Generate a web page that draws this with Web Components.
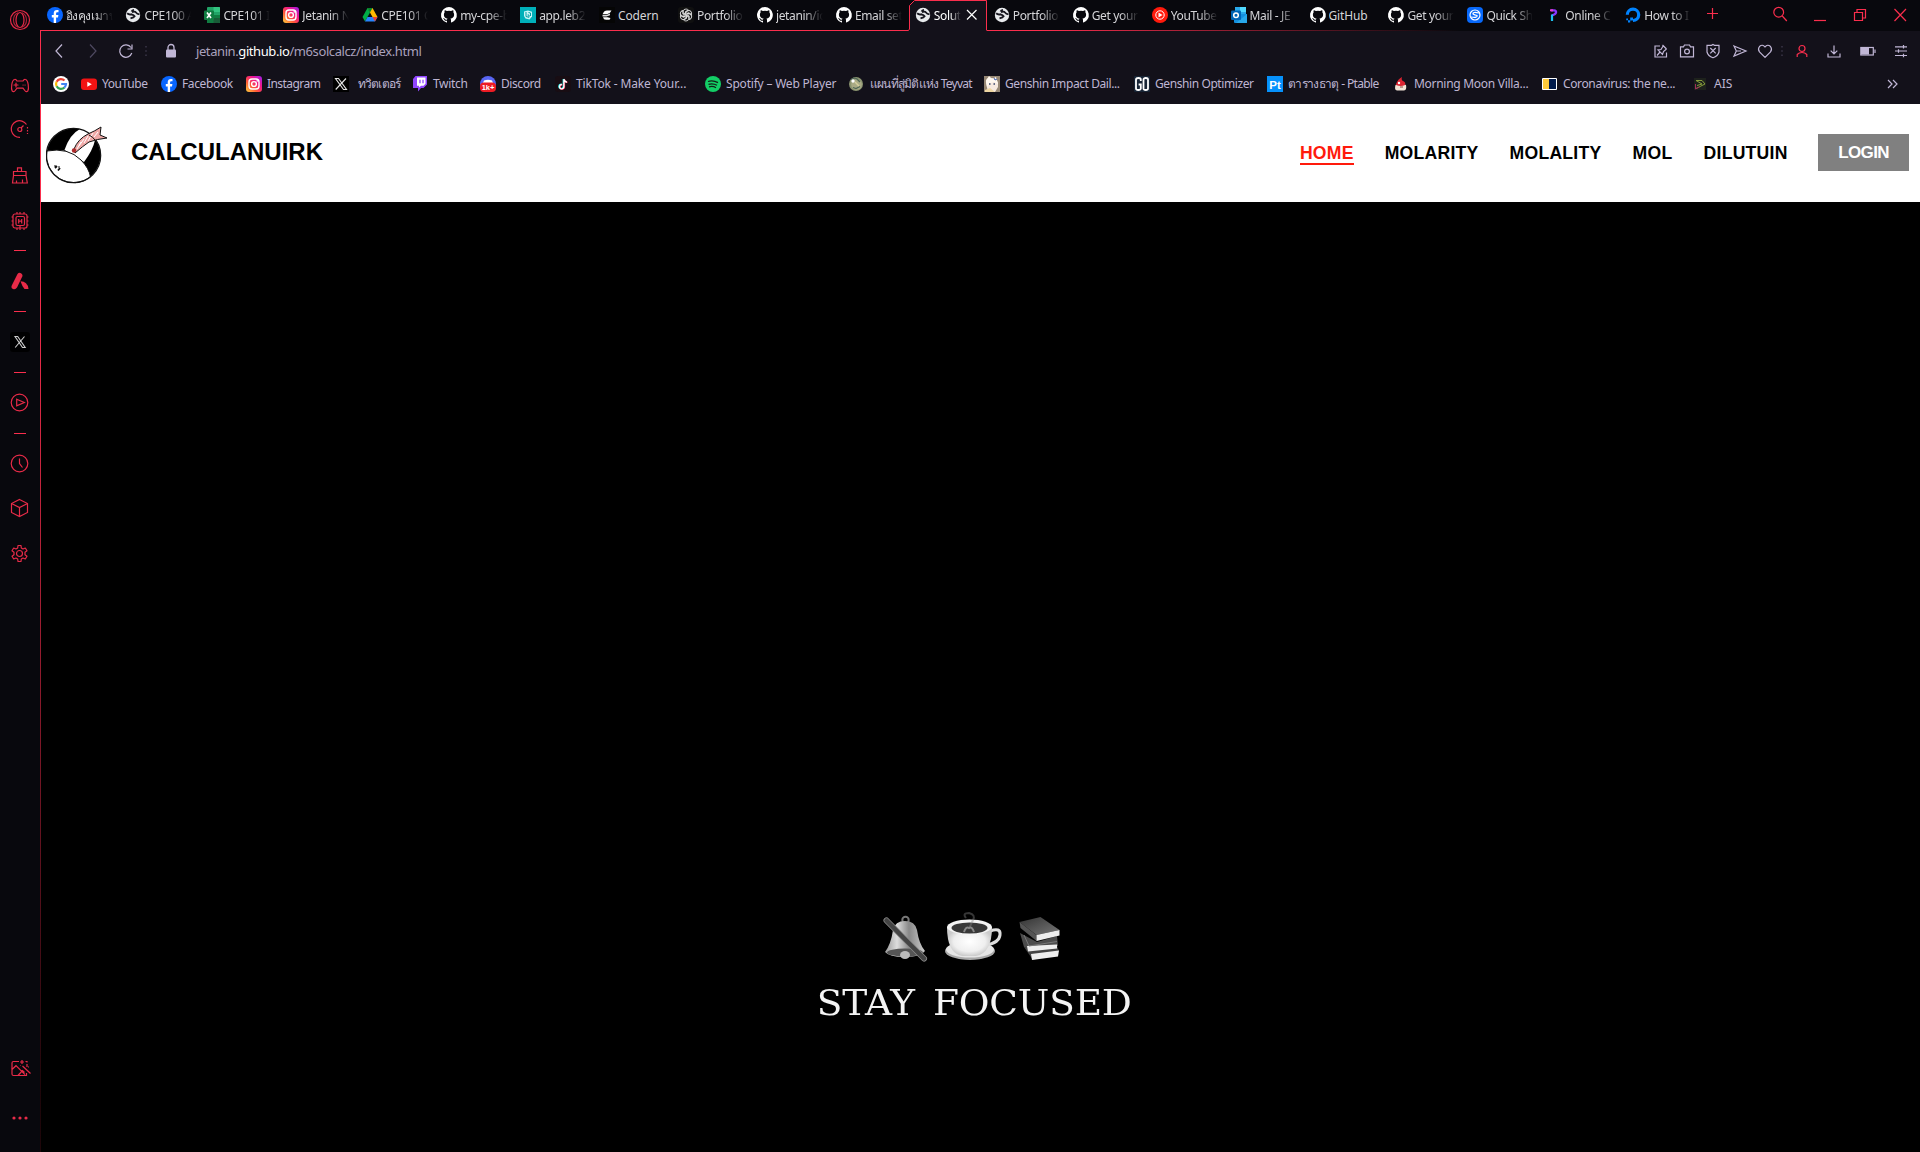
<!DOCTYPE html>
<html lang="en">
<head>
<meta charset="utf-8">
<title>Solution calculator</title>
<style>
html,body{margin:0;height:100%;background:#000;overflow:hidden}
body{font-family:"Noto Sans","Open Sans",sans-serif}
</style>
</head>
<body>
<browser-window></browser-window>
<script>
const globe='<circle cx="8" cy="8" r="7.2" fill="#e8eaed"/><path d="M2.200 6.300Q4 8 6.300 7.300L8.500 8.200 9.500 9.300 8.300 10.500 5.500 11.300" fill="none" stroke="#16151e" stroke-width="1.900"/><path d="M6.500 4.600Q7 3 9 2.800M7 5.200Q10 4 11 5.500T14.500 7.300" fill="none" stroke="#16151e" stroke-width="1.700"/>';
const cat='<path fill="#fff" d="M8 0A8 8 0 0 0 5.5 15.6c.4.1.5-.2.5-.4v-1.5c-2.2.5-2.7-1-2.7-1-.4-.9-.9-1.2-.9-1.2-.7-.5.1-.5.1-.5.8.1 1.2.8 1.2.8.7 1.3 1.9.9 2.3.7.1-.5.3-.9.5-1.1-1.8-.2-3.6-.9-3.6-4 0-.9.3-1.6.8-2.1-.1-.2-.4-1 .1-2.1 0 0 .7-.2 2.2.8a7.700 7.700 0 0 1 4 0c1.500-1 2.200-.8 2.200-.8.4 1.100.2 1.900.1 2.100.5.500.8 1.300.8 2.100 0 3.100-1.900 3.800-3.700 4 .3.3.6.8.6 1.500v2.200c0 .2.1.5.6.4A8 8 0 0 0 8 0z"/>';
const insta='<defs><linearGradient id="a" x1="0" y1="1" x2="1" y2="0"><stop offset="0" stop-color="#ffd23e"/><stop offset=".35" stop-color="#ff5a36"/><stop offset=".65" stop-color="#f0158a"/><stop offset="1" stop-color="#9b20f0"/></linearGradient></defs><rect width="16" height="16" rx="3" fill="url(#a)"/><g fill="none" stroke="#fff" stroke-width="1.4"><rect x="3" y="3" width="10" height="10" rx="3"/><circle cx="8" cy="8" r="2.400"/></g><circle cx="11.200" cy="4.900" r=".8" fill="#fff"/>';
const fb='<circle cx="8" cy="8" r="8" fill="#0866ff"/><path fill="#fff" d="M6.700 16V10.400H4.800V8h1.900V6.500c0-2.500 1.200-3.600 3.300-3.600.7 0 1.200.1 1.500.2v2.100h-1c-1 0-1.400.5-1.400 1.400V8h2.300l-.4 2.400H9.100V16z"/>';
const R='fill="none" stroke="#fa2e4d" stroke-width="1.200"', G='fill="none" stroke="#c1b7d6" stroke-width="1.200"';
const t=(s,x,y,z,c)=>`<text x="${x}" y="${y}" font-size="${z}" fill="${c}" font-family="Liberation Sans" font-weight="700" text-anchor="middle">${s}</text>`;
const ICONS={
 globe,cat,insta,fb,
 excel:'<rect x="3" width="13" height="16" rx="1" fill="#21a366"/><path d="M3 8h13v7q0 1-1 1H3z" fill="#107c41"/><path d="M9.500 0H15q1 0 1 1v4H9.500z" fill="#33c481"/><path d="M9.500 11H16v4q0 1-1 1H9.500z" fill="#185c37"/><rect y="3.500" width="10" height="9.500" rx="1" fill="#107c41"/><path d="m3 5.500 4 5.500M7 5.500 3 11" stroke="#fff" stroke-width="1.600"/>',
 drive:'<path d="M5.500 1h5l5 9h-5z" fill="#ffba00"/><path d="m5.500 1 2.500 4.500L3 14.500.5 10z" fill="#00ac47"/><path d="M3 14.500 5.500 10h10L13 14.500z" fill="#2684fc"/><path d="M13 14.500 10.500 10h5z" fill="#ea4335"/><path d="M5.500 1h5L8 5.500z" fill="#00832d"/>',
 leb:'<rect width="16" height="16" fill="#00b0b9"/><path d="M4 4.500 8 3.500l4 1.200V9.500L9.500 12.500 5.500 11.500 4 9z" fill="#c9f5f7"/><path d="M6 5v4.500l3 .8V8H7.500M8.500 5.500l2 .5v3" fill="none" stroke="#009da5"/>',
 codern:'<rect width="16" height="16" fill="#050505"/><path d="M4 6.500Q5 3.500 8 3.500h4.500L11 5.800 8 7.300H3.500z" fill="#fff"/><path d="M3.500 8h4l3.500-1.500V8.200L7.500 9.500h-4z" fill="#ddd"/><path d="M4 10.300h4.500L11.500 11 10.500 12.800H7Q4.500 12.800 4 10.300z" fill="#fff"/>',
 gpt:'<rect width="16" height="16" rx="3" fill="#101010"/><g fill="none" stroke="#ddd" stroke-width=".9"><path id="p" d="M8 5.700 5.300 7.200V4.200Q5.500 2 8 2q1.500 0 2.300 1L7.500 4.600V8"/><use href="#p" transform="rotate(60 8 8)"/><use href="#p" transform="rotate(120 8 8)"/><use href="#p" transform="rotate(180 8 8)"/><use href="#p" transform="rotate(240 8 8)"/><use href="#p" transform="rotate(300 8 8)"/></g>',
 ytm:'<circle cx="8" cy="8" r="8" fill="#ff1a0c"/><circle cx="8" cy="8" r="4.200" fill="none" stroke="#fff"/><path d="m6.500 5.500 4 2.500-4 2.500z" fill="#fff"/>',
 outlook:'<path d="M4 0h11v8H4z" fill="#28a8ea"/><path d="M9 0h6v5H9z" fill="#50d9ff"/><path d="M3 7h13v9H4q-1 0-1-1z" fill="#1490df"/><path d="m5 16 11-9v8q0 1-1 1z" fill="#28a8ea"/><rect y="3.500" width="10" height="9.500" rx="1" fill="#0064b5"/><circle cx="5" cy="8.200" r="2.300" fill="none" stroke="#fff" stroke-width="1.500"/>',
 quick:'<rect width="16" height="16" rx="4" fill="#0869fb"/><circle cx="8" cy="8" r="5" fill="none" stroke="#fff" stroke-width="1.200"/><path d="M12 6Q5.500 4.500 6 7q1.500 1 4 1.500Q11 11 4 10" stroke="#fff" fill="none" stroke-width="1.200"/>',
 online:'<path d="M5 3.300H8Q10.500 3.500 10 5.500T6 8.300" fill="none" stroke="#8a36ff" stroke-width="2.300"/><path d="M6 7.500v6.500" stroke="#1dc0ef" stroke-width="2.200"/><path d="M4 3.300h3" stroke="#e83bd0" stroke-width="2"/>',
 ocean:'<path d="M8 13.500A5.700 5.700 0 1 0 2.300 7.800" fill="none" stroke="#0083ff" stroke-width="3.200"/><path d="M5.200 10.500H8v3H5.200zM3 13.300h2.200v2.200H3zM1.200 11.500H3v1.800H1.200z" fill="#0083ff"/>',
 google:'<circle cx="8" cy="8" r="8" fill="#fff"/><g fill="none" stroke-width="2.200"><path d="M11.500 4.500A5 5 0 0 0 3.600 5.700" stroke="#ea4335"/><path d="M3.600 5.700a5 5 0 0 0 0 4.600" stroke="#fbbc05"/><path d="M3.600 10.300a5 5 0 0 0 7.900 1.200" stroke="#34a853"/><path d="M11.300 11.600A5 5 0 0 0 13 8H8.200" stroke="#4285f4"/></g>',
 yt:'<rect y="2.500" width="16" height="11.500" rx="3" fill="#f21313"/><path d="m6.300 5.700 4.500 2.500-4.500 2.500z" fill="#fff"/>',
 x:'<rect width="16" height="16" fill="#000"/><path d="M2.500 2.500h3l8 11h-3zM13 2.500 2.700 13.500" fill="none" stroke="#e6e6e6" stroke-width="1.100"/>',
 twitch:'<path d="M3.500 0H15v8.500L11.500 12H9l-3 3.500V12H1V3z" fill="#9146ff"/><path d="M5 1.500h8.500v6.300l-2 2H9L7 11.500V9.800H5z" fill="#fff"/><path d="M8 3.800v3.400M11 3.800v3.400" stroke="#9146ff" stroke-width="1.300"/>',
 discord:'<circle cx="8" cy="8" r="8" fill="#5865f2"/><path d="M4 4.500q4-1.500 8 0l1 2.500H3z" fill="#fff"/><rect y="6.500" width="16" height="9.500" rx="4" fill="#ed1c24"/>'+t('1k+',8,14,7.500,'#fff'),
 tiktok:'<rect width="16" height="16" rx="3" fill="#180d13"/><path d="M8.400 3v7.400a2.200 2.200 0 1 1-2-2.200M8.500 3q.5 2.500 3 2.800" fill="none" stroke="#25f4ee" stroke-width="1.600"/><path d="M9.400 3.600V11a2.200 2.200 0 1 1-2-2.200M9.500 3.600q.5 2.500 3 2.800" fill="none" stroke="#fe2c55" stroke-width="1.400"/><path d="M8.900 3.300v7.400a2.200 2.200 0 1 1-2-2.200M9 3.300q.5 2.500 3 2.800" fill="none" stroke="#fff" stroke-width="1.300"/>',
 spotify:'<circle cx="8" cy="8" r="8" fill="#13ce66"/><path d="M3 5.500q5-1.500 10 1.100M3.500 8.300q4.500-1.300 8.500 1M4 10.800q4-1 7 .9" fill="none" stroke="#122017" stroke-width="1.300"/>',
 teyvat:'<circle cx="7" cy="8" r="7" fill="#8b9470"/><circle cx="7.500" cy="8.500" r="5.300" fill="#a9aa85"/><path d="M2 4q3-3 6-1l3 3M4 11.500l3 1 4-2" fill="none" stroke="#4f6656" stroke-width="1.300"/><path d="m6 6 4 4" stroke="#d6cf9e" stroke-width="1.500"/><circle cx="4" cy="5" r="1.700" fill="#fff"/>',
 paimon:'<rect width="16" height="16" fill="#968774"/><path d="M2 7Q1 1 8 2q7 0 6 9l-3 5H4z" fill="#f6e9df"/><path d="M2 5l3-5 3 3 4-2 2 7-4-2-4 1-3 4z" fill="#fff8ef"/><path d="M5 8h1.500M9.500 8h1.500" stroke="#38456a" stroke-width="1.500"/><path d="m10 2 1 2 2-1" stroke="#3f60b0" fill="none"/><path d="m1 14 5-2 5 4H1z" fill="#eed6a2"/>',
 go:'<rect width="16" height="16" rx="1" fill="#172435"/><path d="M6.800 5V3.500Q6.800 2 4.500 2T2 3.500v9Q2 14 4.300 14t2.500-1.500V8.500H4.600M9.500 3.500Q9.500 2 11.700 2T14 3.500v9q0 1.500-2.300 1.500T9.500 12.500z" fill="none" stroke="#fff" stroke-width="1.800"/>',
 pt:'<rect width="16" height="16" fill="#0691fb"/>'+t('Pt',8,12.500,11.500,'#fff'),
 moon:'<path d="M2.500 9Q1 14 4 14.500h7q3-.5 2-5.500L8 7z" fill="#f2e4d6"/><path d="M3 8q2-5 6-7-1 3 1 4 3 1 2 4-4 2-9 0z" fill="#db2431"/><circle cx="6" cy="7" r="1.200" fill="#fff"/><path d="M7 11h3" stroke="#8d4b42"/>',
 covid:'<path d="M.5 2.500h14v11H.5z" fill="#001a4b" stroke="#fff"/><path d="M1 3h6v10H1z" fill="#ffca3a"/>',
 ais:'<rect x="1" y="2" width="12" height="12" fill="#1d211c"/><path d="M3 4.500h6L12 8 3 12.500M3 4.500 9 8l-5 1.500" fill="none" stroke="#879d3b"/><path d="M2.500 8v5l4-2" fill="none" stroke="#a22c59"/>',
 // toolbar
 back:`<path d="M11 1.500 5 8l6 6.500" ${G}/>`, fwd:'<path d="m5 1.500 6 6.500-6 6.500" fill="none" stroke="#4e4960" stroke-width="1.200"/>',
 reload:`<path d="M13.800 10A6.200 6.200 0 1 1 13 4.500M14 1.500v4.500H9.500" ${G}/>`,
 dots:'<path d="M7 3h2v1.500H7zM7 7.300h2v1.500H7zM7 11.500h2V13H7z" fill="#302c3c"/>',
 lock:'<path d="M5 7V4.500a3 3 0 0 1 6 0V7" fill="none" stroke="#c1b7d6" stroke-width="1.300"/><rect x="3" y="6.500" width="10" height="8" rx="1" fill="#c1b7d6"/>',
 pin:`<path d="M7 3H2v11h11.500V9.500M9.500 2l4 4M10.300 2.800 8 6.500l-3 .5 4.500 4.500 1-3 3-2.500M7 9l-3 3.500" ${G}/>`,
 camera:`<path d="M1.500 3.800h3L5.500 2h5l1 1.800h3v10h-13z" ${G}/><circle cx="8" cy="8.500" r="2.400" ${G}/>`,
 shield:`<path d="m8 1.500 1.500.8h4.500V9Q13 13 8 14.800 3 13 2 9V2.300h4.500zM5.300 5l5.400 5.400M10.700 5l-5.400 5.400" ${G}/>`,
 send:`<path d="m2 3 12 5-12 5 2.300-5zM4.300 8H9" ${G}/>`,
 heart:`<path d="M8 14.300 2.500 8.800Q.5 6 2.500 3.500 5.500.8 8 4q2.500-3.200 5.500-.5 2 2.500 0 5.300z" ${G}/>`,
 person:`<circle cx="8" cy="5.500" r="3" ${R}/><path d="M3.200 14v-2.500Q5 9.500 8 9.500t4.800 2V14" ${R}/>`,
 download:`<path d="M2 10.500V14h12v-3.500M8 2.500V11M4.700 7.700 8 11l3.300-3.300" ${G}/>`,
 battery:`<rect x=".8" y="4.500" width="12.500" height="7.500" ${G}/><path d="M1 5h8v6.500H1z" fill="#c1b7d6"/><path d="M15 6.500V10" ${G}/>`,
 sliders:`<path d="M2 3.800h12M2 8h12M2 12.500h12M10.500 2v3.600M5.500 6.200v3.600M10.500 10.700v3.600" ${G}/>`,
 chevs:`<path d="m4 4 4 4-4 4M9 4l4 4-4 4" ${G}/>`,
 close:'<path d="m3 3 9.500 9.500M12.500 3 3 12.500" stroke="#fff" stroke-width="1.200"/>',
 plus:`<path d="M8.500 2v11M3 7.500h11" ${R}/>`, search:`<circle cx="6.700" cy="6.200" r="4.900" ${R}/><path d="m10.300 10 4.500 5" ${R}/>`,
 min:`<path d="M2 14.500h12" ${R}/>`, restore:`<path d="M2.500 5.500h8v8h-8zM5 5.500v-3h8.500V11h-3" ${R}/>`, wclose:`<path d="m2.500 2 11.500 12M14 2 2.500 14" ${R}/>`,
 // sidebar
 opera:`<circle cx="10" cy="10" r="9.500" ${R}/><ellipse cx="10" cy="10" rx="4" ry="7.500" ${R}/><path d="M12 2.800q4.500 2 4.500 7.200T12 17.200M8 2.800Q3.500 4.800 3.500 10T8 17.200" ${R} opacity=".7"/>`,
 pad:`<path d="M4.500 3.500Q6 3 7 5h6q1-2 2.500-1.500 2 .5 2.700 5 .7 4.500-.4 6.500-1.500 1.500-3-.5L13 12.200H7l-1.800 2.300q-1.500 2-3 .5-1.100-2-.4-6.500.7-4.500 2.700-5z" ${R}/><path d="M6 7v4M4 9h4M13 9h.1M15 9h.1" ${R} stroke-linecap="round"/>`,
 gauge:`<path d="M10 18.300A8.300 8.300 0 1 1 16.500 5.500" ${R}/><path d="M17.500 8v7" ${R} stroke-dasharray="1.500 1.500"/><circle cx="9.800" cy="10.500" r="2" ${R}/><path d="m11 9 2.500-2.500" ${R}/>`,
 broom:`<path d="M7.500 6.500V2.800h4v3.700M3.500 6.500h12.500v4H3.500zM3.500 10.500 2.500 18h14.800l-1.300-7.500M6.500 18v-2.500M12.500 18v-3.500" ${R}/>`,
 chip:`<rect x="3" y="3" width="14" height="14" rx="2" ${R}/><rect x="6" y="5.500" width="8.500" height="9" rx="1.500" ${R}/><path d="M8.700 8v4.500M11.700 8v4.500M8.700 10.200h3M7 3V1M10 3V1M14 3V1M7 17v2M10 19v-4M14 19v-2M3 6H1.500M3 10H1.500M3 14H1.500M18.500 6H17M18.500 10H17M18.500 14H17" ${R}/>`,
 gx:'<path d="M7.500 3Q9 1 11 2.200T12.300 5.500L7 16.500Q5.500 19 3 18T2 14z" fill="#fa2e4d"/><path d="M10.500 10.300q7 0 8 7.700H14.500Q12 15 10.500 10.300z" fill="#fa2e4d"/>',
 sx:'<rect width="20" height="20" rx="3" fill="#000"/><path d="M5 4.500h2.700l7.500 11h-2.700zM14.500 4.500l-9.300 11" fill="none" stroke="#ddd" stroke-width="1.100"/>',
 play:`<circle cx="9.500" cy="10.500" r="8.300" ${R}/><path d="m6.700 7.200 7.600 3.300-7.600 3.300z" ${R}/>`,
 clock:`<circle cx="9.500" cy="10.500" r="8.300" ${R}/><path d="M9.500 5.500v5l3 4" ${R}/>`,
 cube:`<path d="m9.500 1.500 8 4v9l-8 4-8-4v-9zM1.500 5.500l8 4 8-4M9.500 9.500v9" ${R}/>`,
 gear:`<circle cx="9.500" cy="10.500" r="3" ${R}/><path d="M7.700 5 8 2.500h3l.3 2.500 1.700 1 2.300-1 1.700 2.700-2 1.500v2.600l2 1.500-1.700 2.700-2.300-1-1.700 1-.3 2.500H8L7.700 16 6 15l-2.300 1L2 13.300l2-1.500V9.200L2 7.700 3.700 5 6 6z" ${R} stroke-linejoin="round"/>`,
 image:`<path d="M9 2.500H3.500Q2 2.500 2 4v11q0 1.500 1.500 1.500h13V14M2 10.500l4-3.800 9 9M8 16.500l4.500-5 2 2M12.500 7l8 7.500M12 1v4M10 3h4M17 5v3M15.500 2.500H17v1M10.500 6.500h.5M18 8h1" ${R}/>`,
 more:'<g fill="#fa2e4d"><circle cx="4" cy="10" r="1.600"/><circle cx="10" cy="10" r="1.600"/><circle cx="16" cy="10" r="1.600"/></g>'
};
const def=(name,html,init)=>customElements.define(name,class extends HTMLElement{
 connectedCallback(){ if(this.shadowRoot)return; const r=this.attachShadow({mode:'open'}); r.innerHTML=typeof html==='function'?html(this):html; if(init)init(this,r);}
});
def('ui-icon',e=>{const b=e.getAttribute('box')||16,s=e.getAttribute('size')||b;return `<style>:host{display:block;flex:none;width:${s}px;height:${s}px}svg{display:block;overflow:visible}</style><svg width="${s}" height="${s}" viewBox="0 0 ${b} ${b}">${ICONS[e.getAttribute('name')]}</svg>`});
// A single line whose tracking is adjusted to fill a given width.
def('fit-text','<style>:host{display:block;flex:none;white-space:pre}span{display:inline-block}</style><span><slot></slot></span>',(e,r)=>{
 const s=r.querySelector('span'),w=+e.getAttribute('w'),n=[...e.textContent].filter(c=>!/[\u0e31\u0e34-\u0e3a\u0e47-\u0e4e]/.test(c)).length;
 const now=s.offsetWidth; e.style.letterSpacing=((w-now)/n)+'px';
});
def('browser-tab',e=>`<style>:host{display:flex;flex:none;box-sizing:border-box;width:78.95px;height:30px;gap:3px;padding:7px 0 0 0;color:#d5d5d8;font-size:12px;line-height:17px}
 .t{width:47px;overflow:hidden;white-space:nowrap;letter-spacing:-.35px;-webkit-mask-image:linear-gradient(90deg,#000 60%,transparent 100%)}
 :host([whole]) .t{-webkit-mask-image:none;letter-spacing:-.15px}
 :host([active]){color:#fff}:host([active]) .t{width:27px;margin-right:0}
 </style><ui-icon name="${e.getAttribute('icon')}"></ui-icon><div class="t"><slot></slot></div>${e.hasAttribute('active')?'<ui-icon name="close"></ui-icon>':''}`);
const tabs=[['fb','อิงคุงเมาน'],['globe','CPE100 A'],['excel','CPE101 I'],['insta','Jetanin N'],['drive','CPE101 C'],['cat','my-cpe-b'],['leb','app.leb2'],['codern','Codern'],['gpt','Portfolio'],['cat','jetanin/io'],['cat','Email set'],['globe','Solut'],['globe','Portfolio'],['cat','Get your'],['ytm','YouTube'],['outlook','Mail - JE'],['cat','GitHub'],['cat','Get your'],['quick','Quick Sh'],['online','Online C'],['ocean','How to I']];
def('tab-strip',`<style>:host{display:flex;position:relative;height:31px;background:#08080d;padding-left:6.500px}
 .frame{position:absolute;left:0;top:0}
 .tabs{display:flex;position:relative;width:1657.500px}
 .win{display:flex;position:relative;padding-top:6px}
 </style>
 <svg class="frame" width="1880" height="31"><defs><linearGradient id="f" gradientUnits="userSpaceOnUse" x1="1000" x2="1420" y1="0" y2="0"><stop stop-color="#fa2e4d"/><stop offset="1" stop-color="#fa2e4d" stop-opacity="0"/></linearGradient></defs><path d="M869.500 31V5.500L874.500.5H946.500V31z" fill="#13111a"/><path d="M0 30.500H868.500L869.500 29V5.500L874.500.5H946.500V30.500" fill="none" stroke="#fa2e4d"/><path d="M947 30h500v1H947z" fill="url(#f)"/></svg>
 <div class="tabs">${tabs.map(([i,s],k)=>`<browser-tab icon="${i}" ${k==11?'active':''} ${s=='GitHub'||s=='Codern'?'whole':''}>${s}</browser-tab>`).join('')}</div>
 <div class="win"><ui-icon name="plus" style="margin-right:52px"></ui-icon><ui-icon name="search" style="margin-right:24px"></ui-icon><ui-icon name="min" style="margin-right:24px"></ui-icon><ui-icon name="restore" style="margin-right:24px;margin-top:1px"></ui-icon><ui-icon name="wclose" style="margin-top:1px"></ui-icon></div>`);
const left=[['back',18],['fwd',17],['reload',4],['dots',9],['lock',17]];
const right=[['pin',10],['camera',10],['shield',11],['send',9],['heart',1],['dots',4],['person',16],['download',18],['battery',17],['sliders',0]];
const ic=a=>a.map(([n,m])=>`<ui-icon name="${n}" style="margin-right:${m}px"></ui-icon>`).join('');
def('address-bar',`<style>:host{display:flex;align-items:center;box-sizing:border-box;height:41px;padding:0 11px 1px;color:#aaa1bd;font-size:13px;background:#13111a}
 .r{display:flex;margin-left:auto}b{color:#fff;font-weight:400}</style>${ic(left)}<fit-text w="225">jetanin.<b>github.io</b>/m6solcalcz/index.html</fit-text><div class="r">${ic(right)}</div>`);
const marks=[['google','',53,0],['yt','YouTube',81,46],['fb','Facebook',161,51],['insta','Instagram',246,53],['x','ทวิตเตอร์',333,42],['twitch','Twitch',412,34],['discord','Discord',480,40],['tiktok','TikTok - Make Your...',555,110],['spotify','Spotify – Web Player',705,110],['teyvat','แผนที่สู่มิติแห่ง Teyvat',849,102],['paimon','Genshin Impact Dail...',984,115],['go','Genshin Optimizer',1134,99],['pt','ตารางธาตุ - Ptable',1267,91],['moon','Morning Moon Villa...',1393,114],['covid','Coronavirus: the ne...',1542,112],['ais','AIS',1693,18],['chevs','',1884,0]];
def('bookmark-bar',`<style>:host{display:flex;height:32px;padding:0 0 0 13px;background:#13111a;color:#bfb6d3;font-size:12px}
 .m{display:flex;flex:none;gap:5px;align-items:center;height:24px}.m fit-text{margin-top:-1px}.wide{gap:9px}</style>${marks.map(([i,s,x,w],k)=>`<div class="m ${i=='x'?'wide':''}" style="width:${k<16?marks[k+1][2]-x:16}px"><ui-icon name="${i}"></ui-icon>${s?`<fit-text w="${w}">${s}</fit-text>`:''}</div>`).join('')}`);
const side=[['opera',10],['pad',76],['gauge',119],['broom',165],['chip',211],['-',250],['gx',271],['-',311],['sx',332],['-',372],['play',392],['-',433],['clock',453],['cube',498],['gear',543],['image',1059],['more',1108]];
let end=0;
def('side-bar',`<style>:host{display:flex;flex-direction:column;box-sizing:border-box;width:40px;height:1152px;padding-left:10px;background:#08080d}hr{flex:none;width:12px;height:1px;border:0;margin:0 0 0 4px;background:#fa2e4d}ui-icon{opacity:.92}</style>${side.map(([n,y])=>{const m=y-end;end=y+(n=='-'?1:20);return n=='-'?`<hr style="margin-top:${m}px">`:`<ui-icon name="${n}" box="20" style="margin-top:${m}px"></ui-icon>`}).join('')}`);
def('club-logo',`<style>:host{display:block;width:62px;height:58px}svg{display:block}</style><svg width="62" height="58" viewBox="0 0 62 58">
<circle cx="27.500" cy="29.500" r="27" fill="#000"/><path d="M18.500 24Q24 8 34 3q7 1 13 7 2 3 2 4Q47 24 38 36z" fill="#fff"/>
<path d="M.8 25Q22 21 35 34q8 8 9.500 17A27.300 27.300 0 0 1 .8 25z" fill="#fff" stroke="#111"/><circle cx="27.500" cy="29.500" r="27.200" fill="none" stroke="#111" stroke-width="1.200"/>
<path d="M28 23Q32 13 42 8q7-3 13-7l-1 8 7 3q-10 1-18 4-6 4-14 11z" fill="#efa9a7" stroke="#111"/><path d="M33 20l5-7M38 17l4-7M42 15l5-8M31 23l4-7M48 11l4-5" stroke="#fff"/><path d="M43 9q4 2 6 5" fill="none" stroke="#111"/>
<circle cx="28" cy="24.500" r="2.200" fill="#ad2a2a"/><path d="m9 42 2-2M12 44.500l2-2.500M8.500 40h1M12.500 41h1" stroke="#111" stroke-width="1.800"/></svg>`);
def('site-header',`<style>:host{display:flex;align-items:center;box-sizing:border-box;height:98px;padding:0 11px 0 6px;background:#fff;color:#000;font-family:"Liberation Sans",Arial,sans-serif;font-weight:700;font-size:17.600px;line-height:20px}
 club-logo{margin-top:4px}.brand{font-size:24px;line-height:28px;margin:-2px auto 0 23px}
 nav{display:flex;align-items:center;gap:31px}.on{color:#ff1a0c;border-bottom:2px solid #ff1a0c;margin-top:2px}
 .login{background:#808080;color:#fff;padding:9px 20px 8px;margin:-1px 0 0 -.5px;font-size:17px}</style>
 <club-logo></club-logo><fit-text class="brand" w="192">CALCULANUIRK</fit-text>
 <nav><fit-text class="on" w="54">HOME</fit-text><fit-text w="94">MOLARITY</fit-text><fit-text w="92">MOLALITY</fit-text><fit-text w="40">MOL</fit-text><fit-text w="84">DILUTUIN</fit-text><fit-text class="login" w="51">LOGIN</fit-text></nav>`);
def('focus-banner',`<style>:host{display:flex;flex-direction:column;align-items:center;box-sizing:border-box;height:950px;padding:708px 11px 0 0;background:#000;color:#f4f4f4}
 svg{display:block;margin-right:8px}.s{font:35px/44px "DejaVu Serif",serif;word-spacing:6px;margin-top:17px;transform:scaleX(1.07)}</style>
 <svg width="190" height="54" viewBox="876 910 190 54"><defs>
 <linearGradient id="b" x2="1"><stop stop-color="#999"/><stop offset=".3" stop-color="#ddd"/><stop offset=".6" stop-color="#888"/><stop offset="1" stop-color="#ccc"/></linearGradient>
 <linearGradient id="k" x1="0" x2="1" y2="1"><stop stop-color="#333"/><stop offset="1" stop-color="#777"/></linearGradient>
 <radialGradient id="c"><stop stop-color="#fff"/><stop offset=".7" stop-color="#efefef"/><stop offset="1" stop-color="#ccc"/></radialGradient></defs>
 <circle cx="905.500" cy="920" r="3.200" fill="none" stroke="#777" stroke-width="2"/><path d="M893 930q2-9 12-9t12 9q2 14 8 21-4 6-20 6t-20-5q6-8 8-22z" fill="url(#b)"/><ellipse cx="905" cy="952.500" rx="18" ry="4" fill="#555"/><ellipse cx="905" cy="955" rx="5" ry="4" fill="#bbb"/>
 <path d="m886.500 920.500 37.500 38" stroke="#888" stroke-width="6" stroke-linecap="round"/><path d="m886.500 920.500 37.500 38" stroke="#444" stroke-width="4.500" stroke-linecap="round"/>
 <ellipse cx="970" cy="951" rx="25" ry="9" fill="#aaa"/><ellipse cx="970" cy="949.500" rx="24" ry="8" fill="#e6e6e6"/><path d="M990 931q11-4 10 4t-14 10" fill="none" stroke="#ddd" stroke-width="3"/>
 <path d="M947 927q0 26 15 29h14q16-3 16-29z" fill="url(#c)"/><ellipse cx="969.500" cy="927" rx="22.500" ry="7.500" fill="#f4f4f4"/><ellipse cx="969.500" cy="928" rx="18" ry="5.500" fill="#383838"/><path d="M964 932q2-6 5-4 3-2 5 4" fill="none" stroke="#aaa" stroke-width="2" opacity=".7"/><path d="M966 918q-4-5 3-5 7 2 4 7-2 4-4 9" fill="none" stroke="#888" stroke-width="2" opacity=".4"/>
 <path d="m1020 933 17 9 20-6 1 10-25 5-9-4z" fill="#4c4c4c"/><path d="m1024 947 9 3 24-4 2 5-26 9z" fill="#444"/><path d="m1027 946 30-1.500v4l-29 3z" fill="#eee"/><path d="m1031 954 28-3.500-1 6-26 3.500z" fill="#eee"/><path d="m1024 935 5 11 28-4.500" fill="none" stroke="#777"/>
 <path d="m1019.500 922 21-5 19 13-23 5z" fill="url(#k)"/><path d="m1019.500 922 17 13v6l-16-13z" fill="#555"/><path d="m1036.500 935 23-5v5.500l-23 5.500z" fill="#eee"/></svg>
 <fit-text class="s" w="294">STAY FOCUSED</fit-text>`);
def('browser-window',`<style>:host{display:flex;width:1920px;height:1152px;background:#000}main{position:relative;width:1880px;box-sizing:border-box}
 .edge{position:absolute;left:0;top:30px;width:1px;height:1122px;background:linear-gradient(#fa2e4d,#fa2e4d 22%,rgba(250,46,77,.12) 95%)}</style>
 <side-bar></side-bar><main><tab-strip></tab-strip><address-bar></address-bar><bookmark-bar></bookmark-bar><site-header></site-header><focus-banner></focus-banner><div class="edge"></div></main>`);
</script>
</body>
</html>
